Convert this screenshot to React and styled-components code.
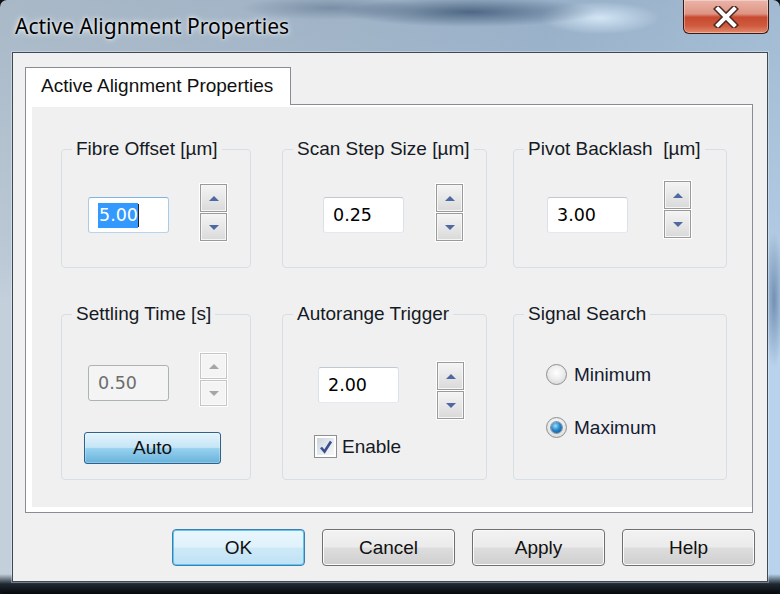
import React from "react";
import styled, { createGlobalStyle } from "styled-components";

const GlobalStyle = createGlobalStyle`
  html, body {
    margin: 0;
    padding: 0;
    background: #0e1116;
  }
  body {
    font-family: "Liberation Sans", Arial, sans-serif;
  }
`;

// aero glass frame
const Window = styled.div`
  width: 780px;
  height: 594px;
  box-sizing: border-box;
  display: flex;
  flex-direction: column;
  padding: 0 12px 12px 12px;
  border-radius: 7px 7px 5px 5px;
  overflow: hidden;
  background:
    radial-gradient(ellipse 170px 20px at 470px 12px, rgba(60, 85, 115, 0.8), transparent 75%),
    radial-gradient(ellipse 120px 16px at 330px 8px, rgba(90, 112, 138, 0.55), transparent 75%),
    radial-gradient(ellipse 80px 22px at 600px 18px, rgba(220, 238, 252, 0.85), transparent 75%),
    radial-gradient(ellipse 14px 90px at 774px 300px, rgba(70, 100, 140, 0.6), transparent 75%),
    linear-gradient(180deg, transparent 0, transparent 574px, #1f2832 584px, #06080a 594px),
    linear-gradient(180deg, rgba(120, 140, 160, 0.35) 0, rgba(120, 140, 160, 0.1) 260px, transparent 300px),
    linear-gradient(90deg, #c3d0dc 0%, #b6c8da 40%, #a9c3dd 70%, #b9d3ec 100%);
`;

const TitleBar = styled.div`
  height: 52px;
  flex: none;
  display: flex;
  justify-content: space-between;
  align-items: flex-start;
  margin: 0 -1px 0 3px;
`;

const Title = styled.div`
  font-family: "Noto Sans", "Liberation Sans", sans-serif;
  font-size: 21px;
  line-height: 26px;
  padding-top: 13px;
  color: #000;
  text-shadow: 0 0 6px rgba(255, 255, 255, 0.9), 0 0 3px rgba(255, 255, 255, 0.8);
`;

const CloseButton = styled.div`
  width: 86px;
  height: 34px;
  box-sizing: border-box;
  border: 1px solid #3b1a14;
  border-top: none;
  border-radius: 0 0 6px 6px;
  display: flex;
  align-items: center;
  justify-content: center;
  box-shadow: inset 0 0 0 1px rgba(255, 255, 255, 0.35);
  background: linear-gradient(
    180deg,
    #eab4a8 0%,
    #de9483 42%,
    #c84a30 52%,
    #cf5a3e 78%,
    #e28a6e 100%
  );
`;

const Client = styled.div`
  flex: none;
  height: 530px;
  box-sizing: border-box;
  background: #f0f0f0;
  border: 1px solid #3e4954;
  box-shadow: 0 0 0 1px rgba(255, 255, 255, 0.3);
  padding: 14px 14px 15px 12px;
  display: flex;
  flex-direction: column;
`;

const TabStrip = styled.div`
  display: flex;
  position: relative;
  z-index: 1;
  margin-bottom: -1px;
`;

const Tab = styled.div`
  width: 266px;
  height: 38px;
  box-sizing: border-box;
  border: 1px solid #898c95;
  border-bottom: none;
  background: #fff;
  display: flex;
  align-items: center;
  padding: 0 0 1px 15px;
  font-size: 19px;
  color: #111;
`;

const TabPanel = styled.div`
  height: 409px;
  box-sizing: border-box;
  border: 1px solid #898c95;
  background: #fff;
  padding: 2px 0 5px 6px;
  display: flex;
`;

const Page = styled.div`
  flex: 1;
  background: #f0f0f0;
  padding: 32px 0 0 29px;
  display: grid;
  grid-template-columns: 221px 231px 214px;
  grid-template-rows: 129px 176px;
  row-gap: 36px;
  align-content: start;
`;

const GroupBox = styled.fieldset`
  width: ${(p) => p.$w}px;
  box-sizing: border-box;
  margin: 0;
  padding: 0;
  min-width: 0;
  border: 1px solid #d5dfe5;
  border-radius: 4px;
`;

const Legend = styled.legend`
  margin-left: 10px;
  padding: 0 4px;
  font-size: 19px;
  line-height: 20px;
  color: #151a24;
  white-space: pre;
`;

const SpinRow = styled.div`
  display: flex;
  align-items: flex-start;
  padding: ${(p) => p.$pt}px 0 0 ${(p) => p.$pl}px;
`;

const TextBox = styled.div`
  width: 81px;
  height: 36px;
  box-sizing: border-box;
  margin-top: ${(p) => p.$mt}px;
  padding-left: 9px;
  display: flex;
  align-items: center;
  border: 1px solid;
  border-color: ${(p) =>
    p.$disabled
      ? "#adb2b5"
      : p.$focused
      ? "#7fb3e3 #a9cbe8 #b8d4ec #a9cbe8"
      : "#c2c8d0 #dbe1e8 #e3e9ef #dbe1e8"};
  border-radius: 3px;
  background: ${(p) => (p.$disabled ? "#f4f4f4" : "#fff")};
  color: ${(p) => (p.$disabled ? "#6d6d6d" : "#000")};
  font-family: "DejaVu Sans", sans-serif;
  font-size: 17.5px;
`;

const Selected = styled.span`
  background: #3399ff;
  color: #fff;
  line-height: 25px;
  padding-left: 1px;
`;

const Caret = styled.span`
  width: 1px;
  height: 23px;
  background: #222;
`;

const Spinner = styled.div`
  width: 29px;
  box-sizing: border-box;
  margin-left: ${(p) => p.$ml}px;
  padding: 1px;
  background: #fff;
  display: flex;
  flex-direction: column;
  gap: 1px;
`;

const SpinButton = styled.div`
  height: ${(p) => p.$h}px;
  box-sizing: border-box;
  border: 1px solid ${(p) => (p.$disabled ? "#c6c6c6" : "#9a9a9a")};
  box-shadow: inset 0 0 0 1px ${(p) => (p.$disabled ? "#fafafa" : "#f6f6f6")};
  background: ${(p) =>
    p.$disabled ? "#f4f4f4" : "linear-gradient(180deg, #f4f4f4 0%, #e6e6e6 55%, #d9d9d9 100%)"};
  display: flex;
  align-items: center;
  justify-content: center;
`;

const Arrow = ({ down, disabled }) => (
  <svg width="10" height="5" viewBox="0 0 10 5">
    <path
      d={down ? "M0 0 L10 0 L5 5 Z" : "M0 5 L10 5 L5 0 Z"}
      fill={disabled ? "#a6a6a6" : "#4d68a3"}
    />
  </svg>
);

const Spin = ({ ml, h = 28, disabled }) => (
  <Spinner $ml={ml}>
    <SpinButton $h={h} $disabled={disabled}>
      <Arrow disabled={disabled} />
    </SpinButton>
    <SpinButton $h={h} $disabled={disabled}>
      <Arrow down disabled={disabled} />
    </SpinButton>
  </Spinner>
);

const AutoButton = styled.div`
  width: 137px;
  height: 32px;
  box-sizing: border-box;
  margin: 25px 0 0 22px;
  border: 1px solid #2c628b;
  border-radius: 3px;
  box-shadow: inset 0 0 0 1px rgba(255, 255, 255, 0.25);
  background: linear-gradient(180deg, #e5f4fc 0%, #c4e5f6 48%, #98d1ef 52%, #68b3db 100%);
  display: flex;
  align-items: center;
  justify-content: center;
  font-size: 19px;
  color: #111;
`;

const CheckRow = styled.div`
  display: flex;
  align-items: center;
  gap: 5px;
  margin: 15px 0 0 31px;
  font-size: 19px;
  color: #151a24;
`;

const CheckBox = styled.div`
  width: 23px;
  height: 23px;
  box-sizing: border-box;
  border: 1px solid #8e8f8f;
  padding: 2px;
  background: #fff;
  display: flex;
`;

const CheckInner = styled.div`
  flex: 1;
  background: linear-gradient(135deg, #cbd3dc 0%, #e9edf1 60%, #f6f7f9 100%);
  display: flex;
  align-items: center;
  justify-content: center;
`;

const RadioList = styled.div`
  display: flex;
  flex-direction: column;
  gap: 32px;
  padding: 40px 0 0 32px;
`;

const RadioRow = styled.div`
  display: flex;
  align-items: center;
  gap: 7px;
  height: 21px;
  font-size: 19px;
  color: #151a30;
`;

const RadioCircle = styled.div`
  width: 21px;
  height: 21px;
  box-sizing: border-box;
  border-radius: 50%;
  border: 1px solid #8e8f8f;
  background: radial-gradient(circle at 50% 40%, #ffffff 0%, #eeeeee 45%, #cfcfcf 100%);
  display: flex;
  align-items: center;
  justify-content: center;
`;

const RadioDot = styled.div`
  width: 11px;
  height: 11px;
  border-radius: 50%;
  background: radial-gradient(circle at 40% 35%, #9ee0fa 0%, #2a86c8 45%, #0d4a82 100%);
  box-shadow: 0 0 0 1px rgba(20, 60, 100, 0.5);
`;

const ButtonRow = styled.div`
  display: flex;
  justify-content: flex-end;
  gap: 17px;
  margin: 16px -2px 0 0;
`;

const DialogButton = styled.div`
  width: 133px;
  height: 37px;
  box-sizing: border-box;
  border: 1px solid ${(p) => (p.$default ? "#3c7fb1" : "#707070")};
  border-radius: 4px;
  box-shadow: inset 0 0 0 1px ${(p) => (p.$default ? "#62c6ee" : "#fbfbfb")};
  background: ${(p) =>
    p.$default
      ? "linear-gradient(180deg, #eaf6fd 0%, #e0f2fc 48%, #cde9f8 52%, #bfe2f5 100%)"
      : "linear-gradient(180deg, #f2f2f2 0%, #ebebeb 48%, #dddddd 52%, #cfcfcf 100%)"};
  display: flex;
  align-items: center;
  justify-content: center;
  font-size: 19px;
  color: #111;
`;

const Radio = ({ checked, children }) => (
  <RadioRow>
    <RadioCircle>{checked && <RadioDot />}</RadioCircle>
    {children}
  </RadioRow>
);

export default function App() {
  return (
    <>
      <GlobalStyle />
      <Window>
        <TitleBar>
          <Title>Active Alignment Properties</Title>
          <CloseButton>
            <svg width="26" height="22" viewBox="0 0 26 22">
              <path d="M5 3 L21 19 M21 3 L5 19" stroke="#4a2a24" strokeWidth="7" strokeLinecap="square" />
              <path d="M5 3 L21 19 M21 3 L5 19" stroke="#fff" strokeWidth="4" strokeLinecap="square" />
            </svg>
          </CloseButton>
        </TitleBar>
        <Client>
          <TabStrip>
            <Tab>Active Alignment Properties</Tab>
          </TabStrip>
          <TabPanel>
            <Page>
              <GroupBox $w={190}>
                <Legend>Fibre Offset [µm]</Legend>
                <SpinRow $pt={24} $pl={26}>
                  <TextBox $mt={14} $focused>
                    <Selected>5.00</Selected>
                    <Caret />
                  </TextBox>
                  <Spin ml={30} />
                </SpinRow>
              </GroupBox>
              <GroupBox $w={205}>
                <Legend>Scan Step Size [µm]</Legend>
                <SpinRow $pt={24} $pl={40}>
                  <TextBox $mt={14}>0.25</TextBox>
                  <Spin ml={31} />
                </SpinRow>
              </GroupBox>
              <GroupBox $w={214}>
                <Legend>Pivot Backlash  [µm]</Legend>
                <SpinRow $pt={21} $pl={33}>
                  <TextBox $mt={17}>3.00</TextBox>
                  <Spin ml={35} />
                </SpinRow>
              </GroupBox>

              <GroupBox $w={190}>
                <Legend>Settling Time [s]</Legend>
                <SpinRow $pt={28} $pl={26}>
                  <TextBox $mt={13} $disabled>0.50</TextBox>
                  <Spin ml={30} h={26} disabled />
                </SpinRow>
                <AutoButton>Auto</AutoButton>
              </GroupBox>
              <GroupBox $w={205}>
                <Legend>Autorange Trigger</Legend>
                <SpinRow $pt={37} $pl={35}>
                  <TextBox $mt={6}>2.00</TextBox>
                  <Spin ml={37} />
                </SpinRow>
                <CheckRow>
                  <CheckBox>
                    <CheckInner>
                      <svg width="14" height="14" viewBox="0 0 14 14">
                        <path d="M2 7.5 L5.5 11.5 L12 1.5" fill="none" stroke="#3b4f8e" strokeWidth="2.6" />
                      </svg>
                    </CheckInner>
                  </CheckBox>
                  Enable
                </CheckRow>
              </GroupBox>
              <GroupBox $w={214}>
                <Legend>Signal Search</Legend>
                <RadioList>
                  <Radio>Minimum</Radio>
                  <Radio checked>Maximum</Radio>
                </RadioList>
              </GroupBox>
            </Page>
          </TabPanel>
          <ButtonRow>
            <DialogButton $default>OK</DialogButton>
            <DialogButton>Cancel</DialogButton>
            <DialogButton>Apply</DialogButton>
            <DialogButton>Help</DialogButton>
          </ButtonRow>
        </Client>
      </Window>
    </>
  );
}
